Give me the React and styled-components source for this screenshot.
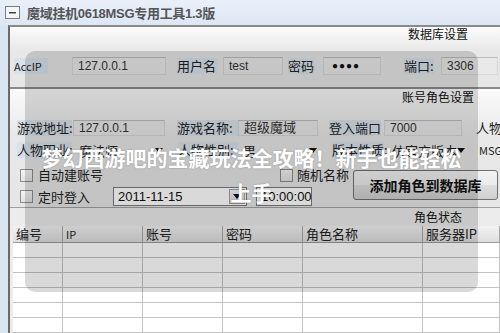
import React from "react";
import styled, { createGlobalStyle } from "styled-components";

const GlobalStyle = createGlobalStyle`
  html, body { margin: 0; padding: 0; }
  body {
    width: 500px; height: 333px; overflow: hidden;
    font-family: "Liberation Sans", "Noto Sans CJK SC", sans-serif;
    font-size: 12px; color: #222;
  }
`;

const Window = styled.div`
  position: relative;
  width: 500px; height: 333px;
  background: #dae5f3;
  display: flex; flex-direction: column;
  overflow: hidden;
`;

const TitleBar = styled.div`
  height: 25px; flex: none;
  display: flex; align-items: center; gap: 7px;
  padding-left: 5px;
  background: linear-gradient(#e9f0f9, #dde7f4);
`;

const TitleText = styled.span`
  font-family: "Liberation Sans", "Noto Sans CJK SC", sans-serif;
  font-weight: bold; font-size: 13px; color: #555;
  letter-spacing: -0.3px;
`;

const Client = styled.div`
  flex: 1;
  margin-left: 8px;
  border-left: 2px solid #6a6a6a;
  border-top: 2px solid #8a8a8a;
  background: #ececec;
  display: flex; flex-direction: column;
  min-height: 0;
`;

const Section = styled.div`
  flex: none;
  display: flex; flex-direction: column;
  background: linear-gradient(#fbfbfb, #e8e8e8 40%, #e6e6e6);
  border-bottom: ${p => p.$border || "none"};
  padding-bottom: ${p => p.$pb || 0}px;
`;

const SectionTitle = styled.div`
  height: ${p => p.$h}px; line-height: ${p => p.$h}px;
  text-align: right;
  padding-right: ${p => p.$pr}px;
  font-family: "Noto Sans CJK SC", sans-serif;
  font-size: 12px; color: #111;
`;

const Row = styled.div`
  display: flex; align-items: center;
  height: ${p => p.$h || 18}px;
  margin-top: ${p => p.$mt || 0}px;
  padding-left: ${p => p.$pl || 0}px;
`;

const Label = styled.span`
  flex: none;
  width: ${p => p.$w}px;
  margin-left: ${p => p.$ml || 0}px;
  height: 16px; line-height: 16px;
  background: ${p => (p.$hl ? "#d9e2ec" : "transparent")};
  font-family: "Noto Sans CJK SC", sans-serif;
  font-size: ${p => p.$fs || 13}px; color: #222;
  white-space: nowrap;
`;

const Field = styled.div`
  flex: none; box-sizing: border-box;
  width: ${p => p.$w}px;
  margin-left: ${p => p.$ml || 0}px;
  height: ${p => p.$h || 18}px;
  line-height: ${p => (p.$h || 18) - 2}px;
  padding-left: 5px;
  background: #e9e9e9;
  border: 1px solid #d6d6d6;
  border-top-color: #bdbdbd;
  font-family: "Liberation Sans", "Noto Sans CJK SC", sans-serif;
  font-size: ${p => p.$fs || 12}px; color: #333;
  white-space: nowrap;
`;

const Dots = styled(Field)`
  font-size: 10px; letter-spacing: 1px; color: #111; padding-left: 8px;
`;

const Select = styled.div`
  flex: none; box-sizing: border-box;
  width: ${p => p.$w}px;
  margin-left: ${p => p.$ml || 0}px;
  height: 16px;
  display: flex; align-items: center; justify-content: space-between;
  padding: 0 4px 0 4px;
  font-family: "Noto Sans CJK SC", sans-serif;
  font-size: 13px; color: #222;
  white-space: nowrap;
`;

const Arrow = styled.span`
  width: 0; height: 0;
  border-left: 4px solid transparent;
  border-right: 4px solid transparent;
  border-top: 5px solid #111;
`;

const Lower = styled.div`
  display: flex;
  margin-top: 9px;
`;

const CheckCol = styled.div`
  display: flex; flex-direction: column; gap: 4px;
  width: 343px; flex: none;
`;

const Check = styled.span`
  flex: none; box-sizing: border-box;
  width: 13px; height: 13px;
  margin-left: ${p => p.$ml || 0}px;
  border: 1px solid #8c8c8c;
  background: linear-gradient(#f4f4f4, #e2e2e2);
`;

const DateBox = styled.div`
  flex: none; box-sizing: border-box;
  width: ${p => p.$w}px;
  margin-left: ${p => p.$ml || 0}px;
  height: 19px;
  display: flex; align-items: center;
  background: #fff;
  border: 1px solid #7b7b7b;
  font-family: "Liberation Sans", sans-serif;
  font-size: 13px; color: #111;
  padding-left: 4px;
`;

const DateText = styled.span`flex: 1;`;

const DropBtn = styled.span`
  width: 16px; height: 15px; margin-right: 1px;
  display: flex; align-items: center; justify-content: center;
  background: linear-gradient(#f6f6f6, #dcdcdc);
  border: 1px solid #a0a0a0; box-sizing: border-box;
`;

const AddButton = styled.button`
  flex: none;
  width: 145px; height: 30px;
  margin-top: 3px;
  border: 1px solid #707070;
  border-radius: 3px;
  background: linear-gradient(#f2f2f2, #ebebeb 50%, #dddddd 51%, #cfcfcf);
  font-family: "Noto Sans CJK SC", sans-serif;
  font-weight: bold; font-size: 14px; color: #111;
  padding: 0;
`;

const Table = styled.div`
  flex: 1;
  margin-left: 3px;
  display: grid;
  grid-template-columns: 50px 80px 80px 80px 120px 1fr;
  grid-template-rows: 17px repeat(6, 15px);
  background: #fff;
`;

const HeadCell = styled.div`
  box-sizing: border-box;
  border-right: 1px solid #a9a9a9;
  border-bottom: 1px solid #9a9a9a;
  background: linear-gradient(#f3f3f3, #dedede);
  padding-left: 3px;
  line-height: 16px;
  font-family: "Noto Sans CJK SC", sans-serif;
  font-size: ${p => p.$fs || 13}px; color: #222;
  white-space: nowrap; overflow: hidden;
`;

const Cell = styled.div`
  box-sizing: border-box;
  border-right: 1px solid #c4c4c4;
  border-bottom: 1px solid #c4c4c4;
`;

const Overlay = styled.div`
  position: absolute;
  left: 25px; top: 51px;
  width: 453px; height: 241px;
  border-radius: 10px;
  background: rgba(0, 0, 0, 0.15);
  box-sizing: border-box;
  padding: 89px 14px 0 14px;
  text-align: center;
`;

const OverlayText = styled.div`
  font-family: "Noto Sans CJK SC", sans-serif;
  font-weight: bold; font-size: 21px; line-height: 35px;
  color: #fff;
  text-shadow: 0 0 2px rgba(0,0,0,0.25);
`;

const columns = ["编号", "IP", "账号", "密码", "角色名称", "服务器IP"];

export default function App() {
  return (
    <>
      <GlobalStyle />
      <Window>
        <TitleBar>
          <svg width="15" height="13" viewBox="0 0 15 13">
            <rect x="0.5" y="0.5" width="14" height="12" fill="#f4f6f9" stroke="#7d7d7d" />
            <rect x="4" y="6" width="7" height="1.5" fill="#444" />
          </svg>
          <TitleText>魔域挂机0618MSG专用工具1.3版</TitleText>
        </TitleBar>
        <Client>
          <Section $border="2px solid #8a8a8a" $pb={12}>
            <SectionTitle $h={14} $pr={32}>数据库设置</SectionTitle>
            <Row $mt={16} $pl={4}>
              <Label $w={34} $hl $fs={11}>AccIP</Label>
              <Field $w={94} $ml={24}>127.0.0.1</Field>
              <Label $w={41} $ml={11} $hl>用户名</Label>
              <Field $w={60} $ml={5}>test</Field>
              <Label $w={27} $ml={5} $hl>密码</Label>
              <Dots $w={58} $ml={8}>●●●●</Dots>
              <Label $w={30} $ml={23} $hl>端口:</Label>
              <Field $w={57} $ml={7}>3306</Field>
            </Row>
          </Section>
          <Section $border="1px solid #a0a0a0" $pb={1}>
            <SectionTitle $h={16} $pr={26}>账号角色设置</SectionTitle>
            <Row $mt={15} $h={16} $pl={7}>
              <Label $w={55} $hl>游戏地址:</Label>
              <Field $w={92} $ml={1} $h={16}>127.0.0.1</Field>
              <Label $w={61} $ml={12} $hl>游戏名称:</Label>
              <Field $w={80} $h={16} $fs={13}>超级魔域</Field>
              <Label $w={52} $ml={11} $hl>登入端口</Label>
              <Field $w={78} $ml={3} $h={16}>7000</Field>
              <Label $w={26} $ml={14}>人物</Label>
            </Row>
            <Row $mt={6} $h={16} $pl={7}>
              <Label $w={55} $hl>人物职业:</Label>
              <Select $w={92} $ml={3}>魔法师<Arrow /></Select>
              <Label $w={61} $ml={11} $hl>人物性别:</Label>
              <Select $w={82}>男<Arrow /></Select>
              <Label $w={52} $ml={11} $hl>版本性质:</Label>
              <Select $w={77} $ml={4}>仿官方版本<Arrow /></Select>
              <Label $w={25} $ml={14} $fs={11}>MSG</Label>
            </Row>
            <Lower>
              <CheckCol>
                <Row $h={16}>
                  <Check $ml={10} />
                  <Label $w={70} $ml={5}>自动建账号</Label>
                  <Check $ml={172} />
                  <Label $w={60} $ml={4}>随机名称</Label>
                </Row>
                <Row $h={19}>
                  <Check $ml={10} />
                  <Label $w={56} $ml={5}>定时登入</Label>
                  <DateBox $w={134} $ml={19}>
                    <DateText>2011-11-15</DateText>
                    <DropBtn><Arrow /></DropBtn>
                  </DateBox>
                  <DateBox $w={56} $ml={9}>10:00:00</DateBox>
                </Row>
              </CheckCol>
              <AddButton>添加角色到数据库</AddButton>
            </Lower>
          </Section>
          <SectionTitle $h={18} $pr={38}>角色状态</SectionTitle>
          <Table>
            {columns.map(c => (
              <HeadCell key={c} $fs={c === "IP" ? 11 : 13}>{c}</HeadCell>
            ))}
            {Array.from({ length: 36 }, (_, i) => <Cell key={i} />)}
          </Table>
        </Client>
        <Overlay>
          <OverlayText>梦幻西游吧的宝藏玩法全攻略！新手也能轻松上手</OverlayText>
        </Overlay>
      </Window>
    </>
  );
}
